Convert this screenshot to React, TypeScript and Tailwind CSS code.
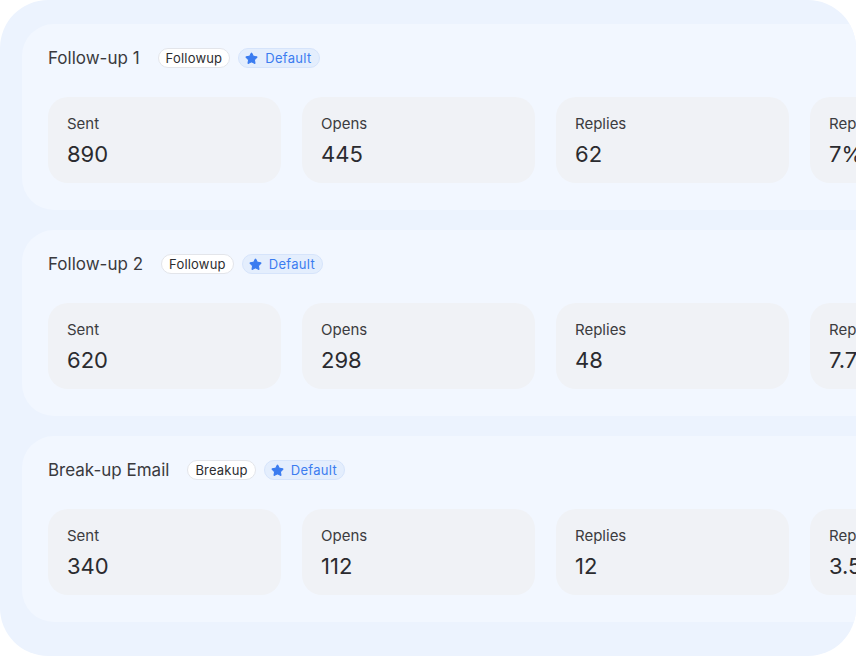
import React from 'react';
import { Star } from 'lucide-react';

type Step = {
  title: string;
  kind: string;
  stats: { label: string; value: string }[];
};

const steps: Step[] = [
  {
    title: 'Follow-up 1',
    kind: 'Followup',
    stats: [
      { label: 'Sent', value: '890' },
      { label: 'Opens', value: '445' },
      { label: 'Replies', value: '62' },
      { label: 'Reply rate', value: '7%' },
    ],
  },
  {
    title: 'Follow-up 2',
    kind: 'Followup',
    stats: [
      { label: 'Sent', value: '620' },
      { label: 'Opens', value: '298' },
      { label: 'Replies', value: '48' },
      { label: 'Reply rate', value: '7.7%' },
    ],
  },
  {
    title: 'Break-up Email',
    kind: 'Breakup',
    stats: [
      { label: 'Sent', value: '340' },
      { label: 'Opens', value: '112' },
      { label: 'Replies', value: '12' },
      { label: 'Reply rate', value: '3.5%' },
    ],
  },
];

const StepCard: React.FC<{ step: Step }> = ({ step }) => (
  <div className="w-[1100px] shrink-0 rounded-[32px] bg-[#f2f7ff] pl-[26px] pt-6 pb-[27px]">
    <div className="flex items-center h-5">
      <h3 className="text-[17px] leading-5 text-[#3a3a3e]">{step.title}</h3>
      <span className="ml-[18px] h-5 px-[7px] rounded-full border border-[#e3e5ea] bg-white text-[13px] leading-[18px] text-[#2d2d30] flex items-center tracking-[0.2px]">
        {step.kind}
      </span>
      <span className="ml-[8px] h-5 pl-[6px] pr-[7px] rounded-full border border-[#d6e4fb] bg-[#e4eefd] text-[13px] leading-[18px] text-[#3b7cf0] flex items-center gap-[7px] tracking-[0.3px]">
        <Star className="w-[13px] h-[13px]" fill="#3b7cf0" strokeWidth={2} strokeLinejoin="round" />
        Default
      </span>
    </div>
    <div className="mt-[29px] flex gap-[21px]">
      {step.stats.map((s) => (
        <div key={s.label} className="w-[233px] h-[86px] shrink-0 rounded-[20px] bg-[#f0f2f6] pl-[19px] pt-[17px]">
          <div className="text-[15px] leading-5 text-[#3c3c40]">{s.label}</div>
          <div className="mt-[6px] text-[22px] leading-7 text-[#2b2b2f]">{s.value}</div>
        </div>
      ))}
    </div>
  </div>
);

export default function App() {
  return (
    <div className="w-[856px] h-[656px] bg-white" style={{ fontFamily: 'Inter, "Noto Sans", sans-serif' }}>
      <div className="w-[856px] h-[656px] rounded-[48px] overflow-hidden bg-[#ecf3fe] pt-6 pl-[22px] flex flex-col gap-5">
        {steps.map((s) => (
          <StepCard key={s.title} step={s} />
        ))}
      </div>
    </div>
  );
}
